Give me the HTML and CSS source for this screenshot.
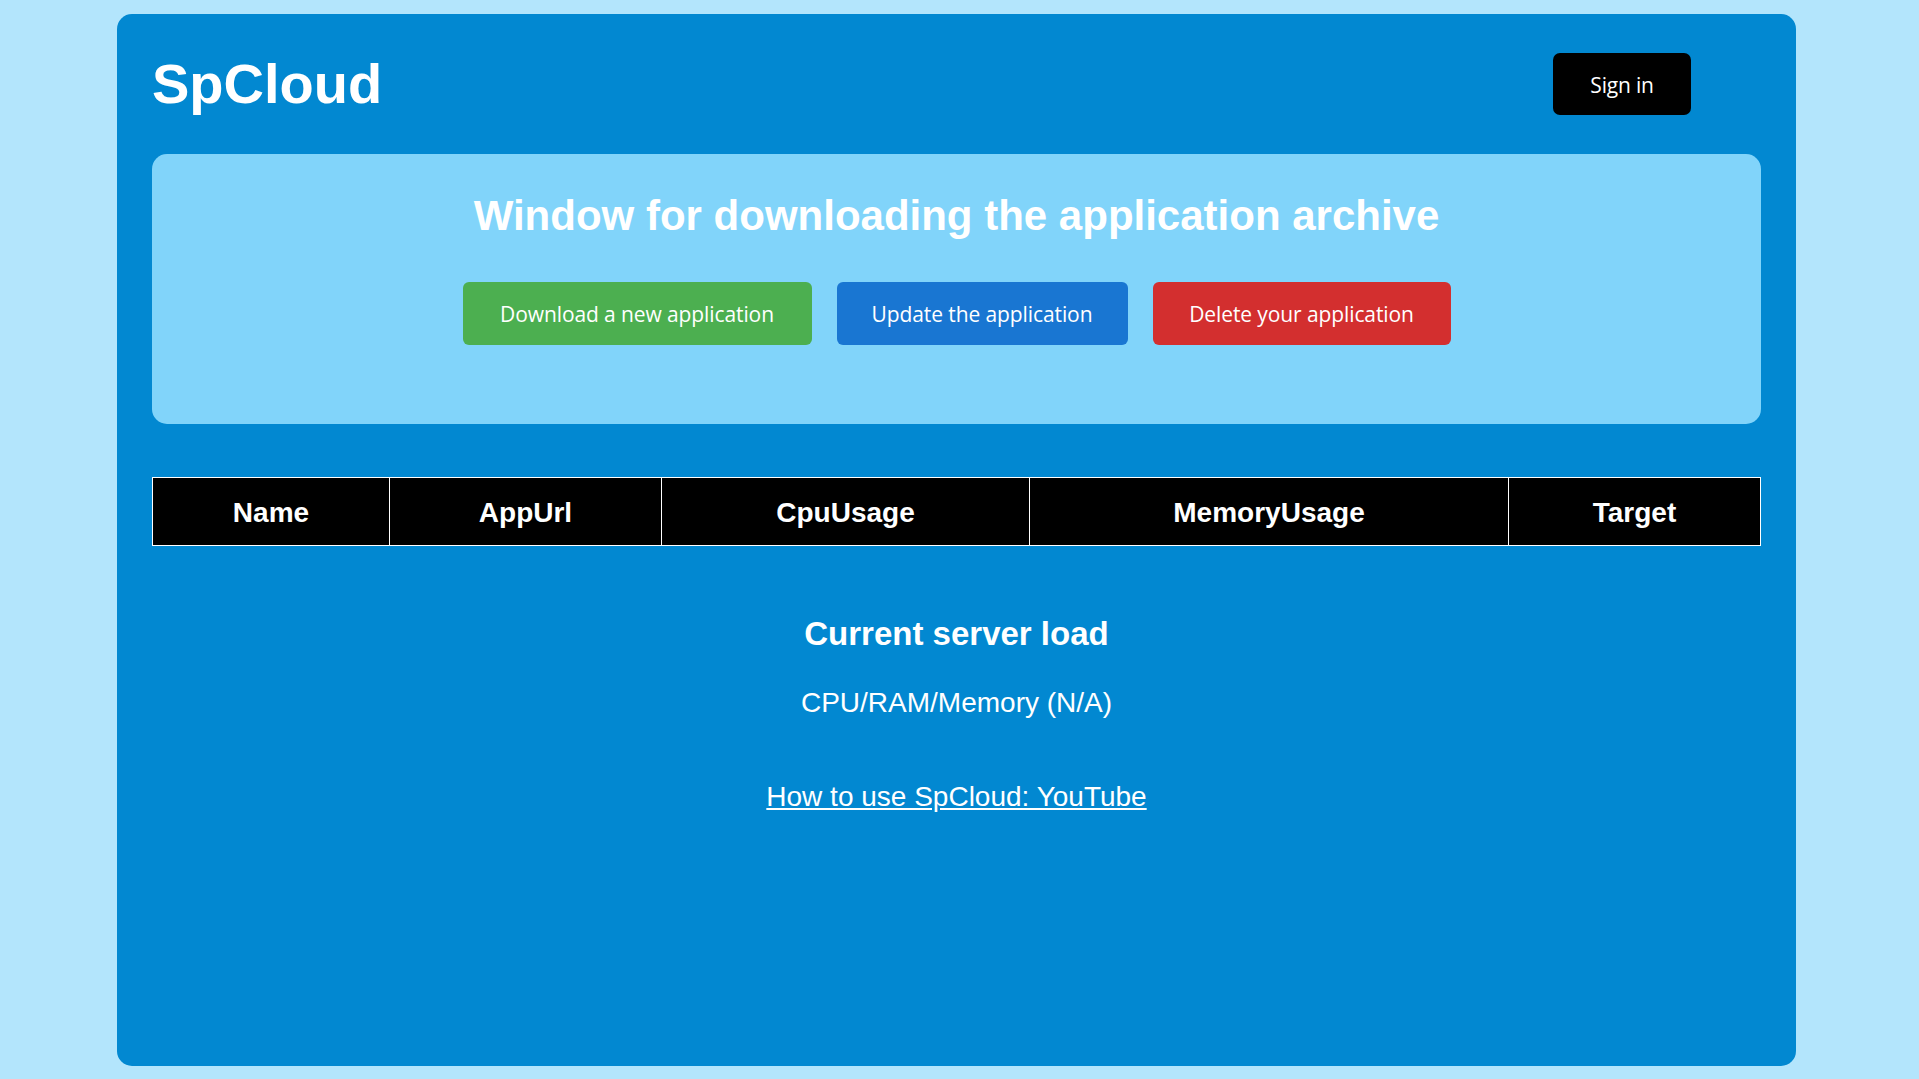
FILE: index.html
```html
<!DOCTYPE html>
<html lang="en">
<head>
<meta charset="utf-8">
<title>SpCloud</title>
<link rel="stylesheet" href="styles.css">
</head>
<body>
<div class="app">
  <header class="header">
    <h1 class="logo">SpCloud</h1>
    <button class="signin">Sign in</button>
  </header>

  <section class="panel">
    <h2 class="panel-title">Window for downloading the application archive</h2>
    <div class="actions">
      <button class="btn btn-green">Download a new application</button>
      <button class="btn btn-blue">Update the application</button>
      <button class="btn btn-red">Delete your application</button>
    </div>
  </section>

  <table class="apps">
    <thead>
      <tr>
        <th class="col-name">Name</th>
        <th class="col-url">AppUrl</th>
        <th class="col-cpu">CpuUsage</th>
        <th class="col-mem">MemoryUsage</th>
        <th class="col-target">Target</th>
      </tr>
    </thead>
  </table>

  <section class="load">
    <h3 class="load-title">Current server load</h3>
    <p class="load-value">CPU/RAM/Memory (N/A)</p>
    <a class="load-link" href="#">How to use SpCloud: YouTube</a>
  </section>
</div>
</body>
</html>
```

FILE: styles.css
```css
html, body {
  margin: 0;
  padding: 0;
}

body {
  background: #b3e5fc;
  font-family: "Liberation Sans", Arial, sans-serif;
  color: #ffffff;
}

.app {
  box-sizing: border-box;
  width: 1679px;
  height: 1052px;
  margin: 14px 0 0 117px;
  padding: 35px;
  background: #0288d1;
  border-radius: 15px;
}

.header {
  display: flex;
  align-items: center;
  justify-content: space-between;
  height: 70px;
  margin-bottom: 35px;
}

.logo {
  margin: 0;
  font-size: 56px;
  line-height: 64px;
  font-weight: 700;
  color: #ffffff;
}

.signin {
  width: 138px;
  height: 62px;
  margin-right: 70px;
  padding: 2px 0 0;
  border: none;
  border-radius: 7px;
  background: #000000;
  color: #ffffff;
  font-family: "Open Sans", "Noto Sans", sans-serif;
  font-size: 21px;
  letter-spacing: -0.2px;
  cursor: pointer;
}

.panel {
  box-sizing: border-box;
  height: 270px;
  padding: 38px 20px 0;
  background: #81d4fa;
  border-radius: 15px;
  text-align: center;
}

.panel-title {
  margin: 0 0 42px;
  font-size: 42px;
  line-height: 48px;
  font-weight: 700;
  color: #ffffff;
}

.actions {
  display: flex;
  justify-content: center;
  gap: 25px;
}

.btn {
  height: 63px;
  padding: 0;
  border: none;
  border-radius: 6px;
  color: #ffffff;
  font-family: "Open Sans", "Noto Sans", sans-serif;
  font-size: 21px;
  letter-spacing: -0.1px;
  cursor: pointer;
}

.btn-green {
  width: 349px;
  background: #4caf50;
}

.btn-blue {
  width: 291px;
  background: #1976d2;
}

.btn-red {
  width: 298px;
  background: #d32f2f;
}

.apps {
  box-sizing: border-box;
  width: 100%;
  margin-top: 53px;
  border-collapse: collapse;
  table-layout: fixed;
  background: #000000;
}

.apps th {
  padding: 19px 0 16px;
  border: 1px solid #ffffff;
  font-size: 28px;
  line-height: 32px;
  font-weight: 700;
  color: #ffffff;
  text-align: center;
}

.col-name { width: 236px; }
.col-url { width: 271px; }
.col-cpu { width: 367px; }
.col-mem { width: 478px; }

.load {
  display: flex;
  flex-direction: column;
  align-items: center;
  margin-top: 69px;
}

.load-title {
  margin: 0;
  font-size: 33px;
  line-height: 38px;
  font-weight: 700;
}

.load-value {
  margin: 34px 0 0;
  font-size: 28px;
  line-height: 32px;
}

.load-link {
  margin-top: 62px;
  font-size: 28px;
  line-height: 32px;
  color: #ffffff;
  text-decoration: underline;
}
```
